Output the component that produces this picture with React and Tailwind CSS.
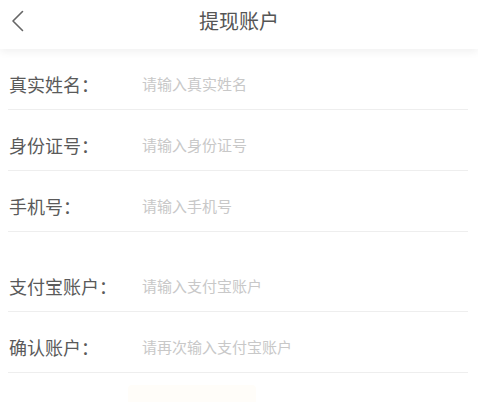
const rows1 = [
  { label: "真实姓名：", ph: "请输入真实姓名" },
  { label: "身份证号：", ph: "请输入身份证号" },
  { label: "手机号：", ph: "请输入手机号" },
];

const rows2 = [
  { label: "支付宝账户：", ph: "请输入支付宝账户" },
  { label: "确认账户：", ph: "请再次输入支付宝账户" },
];

function Row({ label, ph }) {
  return (
    <div className="h-[61px] pt-[10px] border-b border-[#eeeeee] flex items-center">
      <span className="w-[134px] pl-[1px] text-[18px] text-[#5a5a5a] leading-none shrink-0">
        {label}
      </span>
      <input
        className="flex-1 min-w-0 text-[15px] text-[#333] placeholder:text-[#c8c8c8] outline-none bg-transparent"
        placeholder={ph}
      />
    </div>
  );
}

export default function App() {
  return (
    <div
      className="w-[478px] h-[402px] bg-white overflow-hidden"
      style={{ fontFamily: '"Noto Sans CJK SC", "Noto Sans", sans-serif' }}
    >
      <div className="relative h-[49px] flex items-center justify-center bg-white shadow-[0_3px_8px_rgba(0,0,0,0.06)] z-10">
        <svg
          className="absolute left-[10px] top-[10px]"
          width="16"
          height="22"
          viewBox="0 0 16 22"
          fill="none"
        >
          <path d="M12.5 1.5 L3 11 L12.5 20.5" stroke="#666" strokeWidth="1.6" strokeLinecap="round" strokeLinejoin="round" />
        </svg>
        <span className="text-[20px] text-[#555555] leading-none -mt-[7px]">提现账户</span>
      </div>

      <div className="mx-[8px] w-[460px]">
        {rows1.map((r) => (
          <Row key={r.label} {...r} />
        ))}
      </div>

      <div className="mx-[8px] w-[460px] mt-[19px]">
        {rows2.map((r) => (
          <Row key={r.label} {...r} />
        ))}
      </div>

      <div className="mt-[12px] ml-[128px] w-[128px] h-[30px] bg-[#fffdf9] rounded-[4px]" />
    </div>
  );
}
